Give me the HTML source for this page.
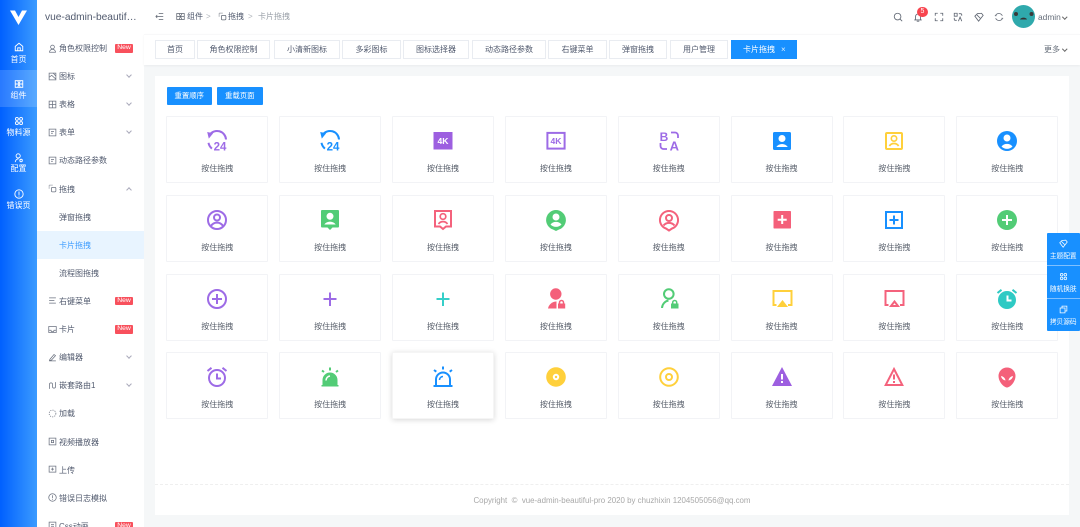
<!DOCTYPE html>
<html lang="zh"><head><meta charset="utf-8"><title>卡片拖拽</title>
<style>
*{box-sizing:border-box}
html,body{margin:0;padding:0}
html{background:#f5f7f8}
body{width:1080px;height:527px;overflow:hidden;position:relative;background:#f5f7f8;font-family:"Liberation Sans","Noto Sans CJK SC",sans-serif;color:#515a6e;font-size:8px;filter:blur(.3px)}
.a{position:absolute}
#col{left:0;top:0;width:37px;height:527px;background:linear-gradient(90deg,#0060ff,#3b9bff)}
#col .n{position:absolute;left:0;width:37px;height:36.7px;color:#fff;text-align:center;font-size:8px}
#col .n svg{position:absolute;left:13.5px;top:5.5px;width:10px;height:10px;fill:none;stroke:#fff;stroke-width:2.2}
#col .n span{position:absolute;left:0;right:0;top:18px;line-height:12px}
#col .on{background:rgba(255,255,255,.16)}
#side{left:37px;top:0;width:107px;height:527px;background:#fff;overflow:hidden}
#side h1{margin:0;position:absolute;left:8px;top:10px;width:96px;font-size:10.2px;line-height:16px;font-weight:400;color:#515a6e;white-space:nowrap;overflow:hidden;text-overflow:ellipsis}
#m{position:absolute;left:0;top:34px;width:107px}
.i{position:relative;height:28.12px;line-height:29px;padding-left:22px;white-space:nowrap;font-size:8px;color:#515a6e}
.i>svg{position:absolute;left:11px;top:9.5px;width:9px;height:9px;fill:none;stroke:#6b7280;stroke-width:2}
.i b{position:absolute;left:78px;top:10px;width:18px;height:8.5px;background:#f8505c;border-radius:1px;color:#fff;font:400 6.8px/8.5px "Liberation Sans",sans-serif;text-align:center}
.i i{position:absolute;left:90px;top:10.5px;width:4px;height:4px;border-right:.8px solid #aab;border-bottom:.8px solid #aab;transform:rotate(45deg)}
.i i.u{top:13px;transform:rotate(225deg)}
.i.s{background:#e8f4ff;color:#3f9dff}
#top{left:144px;top:0;width:936px;height:34px;background:#fff}
#tabs{left:144px;top:34px;width:936px;height:31px;background:#fff;border-top:1px solid #f8f8f9;box-shadow:0 1px 2px rgba(0,21,41,.05)}
.t{position:absolute;top:40px;height:19px;background:#fff;border:1px solid #e9ecf1;font-size:8px;line-height:17px;text-align:center;color:#515a6e}
.t.on{background:#1890ff;border-color:#1890ff;color:#fff;text-align:left;padding-left:11px}
.t.on em{position:absolute;left:49px;top:0;font:400 8px/17px "Liberation Sans",sans-serif;color:#dbeeff}
#main{left:155px;top:76px;width:914px;height:439px;background:#fff}
.btn{position:absolute;top:87px;height:18px;width:45.5px;background:#1890ff;border-radius:1px;color:#fff;font-size:7.4px;line-height:18px;text-align:center}
#g{position:absolute;left:166.3px;top:116.4px;display:grid;grid-template-columns:repeat(8,102px);grid-auto-rows:67px;column-gap:10.85px;row-gap:11.67px}
.c{position:relative;background:#fff;border:1px solid #f2f3f6;border-radius:1px;text-align:center;font-size:8px;color:#555c68}
.c svg{position:absolute;left:38px;top:12px;width:24px;height:24px}
.c p{position:absolute;left:0;right:0;top:46px;margin:0;line-height:12px}
.c.h{border-color:#f5f5f5;box-shadow:0 1px 6px rgba(0,0,0,.16)}
#foot{left:155px;top:484px;width:914px;height:31px;border-top:1px dashed #efefef;text-align:center;font-size:7.9px;line-height:31px;color:#a8a8a8}
#fx{left:1046.5px;top:233px;width:33.5px;height:98px;background:#1890ff;border-radius:1px}
#fx div{position:absolute;left:0;width:33.5px;height:32.5px;color:#fff;font-size:6.7px;text-align:center;border-bottom:1px solid #7fc0ff}
#fx svg{position:absolute;left:12.5px;top:6px;width:9px;height:9px;fill:none;stroke:#fff;stroke-width:2}
#fx span{position:absolute;left:0;right:0;top:19px;line-height:9px;white-space:nowrap}
.ti{position:absolute;top:11.5px;width:10px;height:10px;fill:none;stroke:#5f6672;stroke-width:2}
.bc{position:absolute;top:11px;line-height:12px;font-size:8px;color:#515a6e}
</style></head><body>

<div id="col" class="a">
<svg class="a" style="left:9px;top:9px" width="20" height="18" viewBox="0 0 20 18"><polygon points="1,1.5 6,1.5 9.5,8 13,1.5 18,1.5 9.5,16" fill="#fff"/></svg>
<div class="n" style="top:36px"><svg viewBox="0 0 24 24"><path d="M3 10.5 12 3l9 7.5V21H3zM9 20v-6h6v6"/></svg><span>首页</span></div>
<div class="n on" style="top:70px;height:37px"><svg style="top:9px" viewBox="0 0 24 24"><rect x="3" y="4" width="18" height="16"/><path d="M3 12h18M9 4l6 16M15 4 9 20"/></svg><span style="top:19.5px">组件</span></div>
<div class="n" style="top:107px"><svg style="top:9px" viewBox="0 0 24 24"><circle cx="7" cy="7" r="3.5"/><circle cx="17" cy="7" r="3.5"/><circle cx="7" cy="17" r="3.5"/><circle cx="17" cy="17" r="3.5"/></svg><span style="top:19.5px">物料源</span></div>
<div class="n" style="top:143.5px"><svg style="top:9px" viewBox="0 0 24 24"><circle cx="10" cy="7" r="5"/><path d="M3 22a8 8 0 0 1 8-8"/><circle cx="17" cy="18" r="3"/></svg><span style="top:19px">配置</span></div>
<div class="n" style="top:180px"><svg style="top:9px" viewBox="0 0 24 24"><circle cx="12" cy="12" r="10"/><path d="M12 6v8M12 16v2"/></svg><span style="top:19.5px">错误页</span></div>
</div>

<div id="side" class="a"><h1>vue-admin-beautiful-pro</h1>
<div id="m">
<div class="i"><svg viewBox="0 0 24 24"><circle cx="12" cy="8" r="5"/><path d="M4 22a8 8 0 0 1 16 0z"/></svg>角色权限控制<b>New</b></div>
<div class="i"><svg viewBox="0 0 24 24"><rect x="3" y="3" width="18" height="18"/><path d="M3 14l7-5 11 10M14 3l6 7"/></svg>图标<i></i></div>
<div class="i"><svg viewBox="0 0 24 24"><rect x="3" y="3" width="18" height="18"/><path d="M3 12h18M12 3v18"/></svg>表格<i></i></div>
<div class="i"><svg viewBox="0 0 24 24"><rect x="3" y="3" width="18" height="18"/><path d="M8 9h8M8 14h5"/></svg>表单<i></i></div>
<div class="i"><svg viewBox="0 0 24 24"><rect x="3" y="3" width="18" height="18"/><path d="M8 9h8M8 14h5"/></svg>动态路径参数</div>
<div class="i"><svg viewBox="0 0 24 24"><path d="M3 12V3h9" stroke-dasharray="3 2"/><rect x="9" y="9" width="12" height="12" rx="3"/></svg>拖拽<i class="u"></i></div>
<div class="i">弹窗拖拽</div>
<div class="i s">卡片拖拽</div>
<div class="i">流程图拖拽</div>
<div class="i"><svg viewBox="0 0 24 24"><path d="M3 5h18M3 12h14M3 19h18"/></svg>右键菜单<b>New</b></div>
<div class="i"><svg viewBox="0 0 24 24"><rect x="2" y="4" width="20" height="16"/><path d="M2 14h6a4 4 0 0 0 8 0h6"/></svg>卡片<b>New</b></div>
<div class="i"><svg viewBox="0 0 24 24"><path d="M3 21h18M5 17 16 4l4 3L9 19l-5 1z"/></svg>编辑器<i></i></div>
<div class="i"><svg viewBox="0 0 24 24"><path d="M4 21V9a4 4 0 0 1 8 0v6a4 4 0 0 0 8 0V3"/></svg>嵌套路由1<i></i></div>
<div class="i"><svg viewBox="0 0 24 24" stroke-dasharray="3 3"><circle cx="12" cy="12" r="9"/></svg>加载</div>
<div class="i"><svg viewBox="0 0 24 24"><rect x="3" y="3" width="18" height="18"/><path d="M9 9h6v6H9z"/></svg>视频播放器</div>
<div class="i"><svg viewBox="0 0 24 24"><path d="M3 3h18v16H3zM12 7v8M8 11h8"/></svg>上传</div>
<div class="i"><svg viewBox="0 0 24 24"><circle cx="12" cy="12" r="10"/><path d="M12 6v8M12 16v2"/></svg>错误日志模拟</div>
<div class="i"><svg viewBox="0 0 24 24"><rect x="3" y="3" width="18" height="18"/><path d="M8 9h8M8 14h8"/></svg>Css动画<b>New</b></div>
</div></div>

<div id="top" class="a"></div>
<svg class="ti" style="left:155px;width:9px;height:9px;top:12px" viewBox="0 0 24 24"><path d="M10 4h12M2 12h20M10 20h12M6 8l-4 4M6 16l-4-4" stroke-width="1.8"/></svg>
<svg class="ti" style="left:176px;width:9px;height:9px;top:12px" viewBox="0 0 24 24"><rect x="2" y="4" width="20" height="16"/><path d="M2 12h20M8 4l8 16M16 4 8 20"/></svg>
<span class="bc" style="left:187px">组件</span><span class="bc" style="left:206px;color:#b0b4bb">&gt;</span>
<svg class="ti" style="left:217.500px;width:9px;height:9px;top:12px" viewBox="0 0 24 24"><path d="M3 12V3h9" stroke-dasharray="3 2"/><rect x="9" y="9" width="12" height="12" rx="3"/></svg>
<span class="bc" style="left:228px">拖拽</span><span class="bc" style="left:248px;color:#b0b4bb">&gt;</span>
<span class="bc" style="left:258px;color:#9aa0a8">卡片拖拽</span>

<svg class="ti" style="left:893px" viewBox="0 0 24 24"><circle cx="11" cy="11" r="8"/><path d="M17 17l5 5"/></svg>
<svg class="ti" style="left:913px" viewBox="0 0 24 24"><path d="M3 19h18M6 19v-8a6 6 0 0 1 12 0v8M9 22h6"/></svg>
<div class="a" style="left:917px;top:7px;width:11px;height:10px;border-radius:6px;background:#f8454f;color:#fff;font:400 7px/10px 'Liberation Sans',sans-serif;text-align:center">5</div>
<svg class="ti" style="left:934px" viewBox="0 0 24 24"><path d="M3 9V3h6M15 3h6v6M21 15v6h-6M9 21H3v-6"/></svg>
<svg class="ti" style="left:953px" viewBox="0 0 24 24"><path d="M3 3h7v7H3zM14 4h4a3 3 0 0 1 3 3v2M3 14v3a3 3 0 0 0 3 3h3M13 22l4-10 4 10"/></svg>
<svg class="ti" style="left:974px" viewBox="0 0 24 24"><path d="M2 10l9 12L22 8 18 3 8 4zM7 7l8 8"/></svg>
<svg class="ti" style="left:994px" viewBox="0 0 24 24"><path d="M4 8a9 9 0 0 1 16 1M20 16a9 9 0 0 1-16-1M2 9h4M18 15h4" /></svg>
<svg class="a" style="left:1012px;top:5px" width="23" height="23" viewBox="0 0 23 23"><circle cx="11.5" cy="11.5" r="11.5" fill="#2fa9ac"/><circle cx="4" cy="9" r="2" fill="#3a3a3a"/><circle cx="19.500" cy="9" r="2" fill="#3a3a3a"/><path d="M8 14.500c1-2.500 6-2.500 7 0" fill="#333"/></svg>
<span class="a" style="left:1038px;top:10.5px;font-size:8.4px;line-height:12px;color:#666e7a">admin</span>
<i class="a" style="left:1063px;top:14.5px;width:3.5px;height:3.5px;border-right:.8px solid #666;border-bottom:.8px solid #666;transform:rotate(45deg)"></i>

<div id="tabs" class="a"></div>
<div class="t" style="left:155px;width:40px">首页</div>
<div class="t" style="left:197px;width:73px">角色权限控制</div>
<div class="t" style="left:274px;width:66px">小清新图标</div>
<div class="t" style="left:342px;width:59px">多彩图标</div>
<div class="t" style="left:403px;width:66px">图标选择器</div>
<div class="t" style="left:472px;width:74px">动态路径参数</div>
<div class="t" style="left:548px;width:59px">右键菜单</div>
<div class="t" style="left:609px;width:58px">弹窗拖拽</div>
<div class="t" style="left:670px;width:58px">用户管理</div>
<div class="t on" style="left:731px;width:66px">卡片拖拽<em>×</em></div>
<span class="a" style="left:1044px;top:44px;line-height:12px;font-size:8px;color:#666e7a">更多</span>
<i class="a" style="left:1063px;top:47px;width:3.5px;height:3.5px;border-right:.8px solid #666;border-bottom:.8px solid #666;transform:rotate(45deg)"></i>

<div id="main" class="a"></div>
<div class="btn" style="left:166.5px">重置顺序</div>
<div class="btn" style="left:217px">重载页面</div>

<div id="g">
<div class="c"><svg viewBox="0 0 24 24" fill="none" stroke="#9d6be6" stroke-width="2"><path d="M4.5 6A9 9 0 0 1 21 10.5M3.5 13.8c.4 2.2 1.6 4.2 3.4 5.8"/><path d="M2.2 3l6 1.2-4.4 5.4z" fill="#9d6be6" stroke="none"/><text x="8.6" y="21.6" font-size="11.5" font-weight="700" fill="#9d6be6" stroke="none" font-family="Liberation Sans">24</text></svg><p>按住拖拽</p></div>
<div class="c"><svg viewBox="0 0 24 24" fill="none" stroke="#1890ff" stroke-width="2"><path d="M4.5 6A9 9 0 0 1 21 10.5M3.5 13.8c.4 2.2 1.6 4.2 3.4 5.8"/><path d="M2.2 3l6 1.2-4.4 5.4z" fill="#1890ff" stroke="none"/><text x="8.6" y="21.6" font-size="11.5" font-weight="700" fill="#1890ff" stroke="none" font-family="Liberation Sans">24</text></svg><p>按住拖拽</p></div>
<div class="c"><svg viewBox="0 0 24 24"><rect x="2.5" y="3" width="19" height="17.5" fill="#9d5fe0"/><text x="12" y="15.2" text-anchor="middle" font-size="8.6" font-weight="700" fill="#fff" font-family="Liberation Sans">4K</text></svg><p>按住拖拽</p></div>
<div class="c"><svg viewBox="0 0 24 24"><rect x="3.4" y="3.9" width="17.2" height="15.700" fill="none" stroke="#9d6be6" stroke-width="2"/><text x="12" y="15" text-anchor="middle" font-size="8.6" font-weight="700" fill="#9d6be6" font-family="Liberation Sans">4K</text></svg><p>按住拖拽</p></div>
<div class="c"><svg viewBox="0 0 24 24" fill="none" stroke="#9d6be6" stroke-width="1.8"><path d="M14 3.5h4a3 3 0 0 1 3 3V9M3.5 14v3a3 3 0 0 0 3 3H10"/><text x="2.6" y="12" font-size="12" font-weight="700" fill="#9d6be6" stroke="none" font-family="Liberation Sans">B</text><text x="12.6" y="21.4" font-size="13" font-weight="700" fill="#9d6be6" stroke="none" font-family="Liberation Sans">A</text></svg><p>按住拖拽</p></div>
<div class="c"><svg viewBox="0 0 24 24"><rect x="3" y="3" width="18" height="18" rx="1.5" fill="#1890ff"/><circle cx="12" cy="9.5" r="3.5" fill="#fff"/><path d="M6.3 18a7 7 0 0 1 11.5 0z" fill="#fff"/></svg><p>按住拖拽</p></div>
<div class="c"><svg viewBox="0 0 24 24" fill="none" stroke="#ffd03b" stroke-width="2"><rect x="4" y="4" width="16" height="16" rx="1"/><circle cx="12" cy="9.5" r="2.7" stroke-width="1.6"/><path d="M7.4 17a5.5 5.5 0 0 1 9.2 0" stroke-width="1.8"/></svg><p>按住拖拽</p></div>
<div class="c"><svg viewBox="0 0 24 24"><circle cx="12" cy="12" r="10" fill="#1890ff"/><circle cx="12" cy="9" r="3.5" fill="#fff"/><path d="M6.5 17.5a7 7 0 0 1 11 0 7.5 7.5 0 0 1-11 0z" fill="#fff"/></svg><p>按住拖拽</p></div>

<div class="c"><svg viewBox="0 0 24 24" fill="none" stroke="#9d6be6" stroke-width="2"><circle cx="12" cy="12" r="9"/><circle cx="12" cy="9.5" r="3"/><path d="M6 18a7 7 0 0 1 12 0"/></svg><p>按住拖拽</p></div>
<div class="c"><svg viewBox="0 0 24 24"><path d="M4 2h16a1 1 0 0 1 1 1v15.5a1 1 0 0 1-1 1h-5.500L12 22l-2.500-2.500H4a1 1 0 0 1-1-1V3a1 1 0 0 1 1-1z" fill="#52cc76"/><circle cx="12" cy="8.300" r="3.500" fill="#fff"/><path d="M6.300 16.500a7 7 0 0 1 11.400 0z" fill="#fff"/></svg><p>按住拖拽</p></div>
<div class="c"><svg viewBox="0 0 24 24" fill="none" stroke="#f4627c" stroke-width="2"><path d="M4 3h16v15.500h-5L12 21l-3-2.500H4z"/><circle cx="12" cy="8.500" r="2.800" stroke-width="1.700"/><path d="M7.500 16a5.500 5.500 0 0 1 9 0" stroke-width="1.700"/></svg><p>按住拖拽</p></div>
<div class="c"><svg viewBox="0 0 24 24"><path d="M12 2a10 10 0 0 1 3 19.500L12 23l-3-1.500A10 10 0 0 1 12 2z" fill="#52cc76"/><circle cx="12" cy="9" r="3.500" fill="#fff"/><path d="M6.500 16.500a7 7 0 0 1 11 0 7.500 7.500 0 0 1-11 0z" fill="#fff"/></svg><p>按住拖拽</p></div>
<div class="c"><svg viewBox="0 0 24 24" fill="none" stroke="#f4627c" stroke-width="2"><path d="M12 3a9 9 0 0 1 3 17.500L12 22.500l-3-2A9 9 0 0 1 12 3z"/><circle cx="12" cy="10" r="3"/><path d="M6.500 17.500a7 7 0 0 1 11 0"/></svg><p>按住拖拽</p></div>
<div class="c"><svg viewBox="0 0 24 24"><rect x="3.500" y="3" width="17.500" height="17.500" rx=".8" fill="#f4607a"/><path d="M12.200 7v9M7.700 11.700h9" stroke="#fff" stroke-width="2"/></svg><p>按住拖拽</p></div>
<div class="c"><svg viewBox="0 0 24 24" fill="none" stroke="#1890ff" stroke-width="2"><rect x="4" y="4" width="16" height="16"/><path d="M12 7.500v9M7.500 12h9"/></svg><p>按住拖拽</p></div>
<div class="c"><svg viewBox="0 0 24 24"><circle cx="12" cy="12" r="10" fill="#52cc76"/><path d="M12 7v10M7 12h10" stroke="#fff" stroke-width="2"/></svg><p>按住拖拽</p></div>

<div class="c"><svg viewBox="0 0 24 24" fill="none" stroke="#9d6be6" stroke-width="2"><circle cx="12" cy="12" r="9"/><path d="M12 7v10M7 12h10"/></svg><p>按住拖拽</p></div>
<div class="c"><svg viewBox="0 0 24 24" fill="none" stroke="#9d6be6" stroke-width="2"><path d="M12 5.500v13.500M5.500 12h13"/></svg><p>按住拖拽</p></div>
<div class="c"><svg viewBox="0 0 24 24" fill="none" stroke="#36cfc9" stroke-width="2"><path d="M12 5.500v13.500M5.500 12h13"/></svg><p>按住拖拽</p></div>
<div class="c"><svg viewBox="0 0 24 24" fill="#f4607a"><circle cx="11.800" cy="7" r="5.700"/><path d="M4 21.500a8.500 8.500 0 0 1 8.500-7v7z"/><rect x="14" y="16.500" width="7.200" height="5"/><path d="M15.500 17v-1.500a2 2 0 0 1 4 0V17" fill="none" stroke="#f4607a" stroke-width="1.500"/></svg><p>按住拖拽</p></div>
<div class="c"><svg viewBox="0 0 24 24" fill="none" stroke="#52cc76" stroke-width="2"><circle cx="11.800" cy="7" r="4.800"/><path d="M5 21a8 8 0 0 1 6.500-7.500"/><rect x="14" y="16.500" width="7.500" height="5" fill="#52cc76" stroke="none"/><path d="M15.700 17v-1.500a2 2 0 0 1 4 0V17" stroke-width="1.500"/></svg><p>按住拖拽</p></div>
<div class="c"><svg viewBox="0 0 24 24"><path d="M6.500 18H3.500V4h18v14H18" fill="none" stroke="#ffd03b" stroke-width="2"/><path d="M12.500 13l5.500 7H7z" fill="#ffd03b"/></svg><p>按住拖拽</p></div>
<div class="c"><svg viewBox="0 0 24 24"><path d="M6.500 18H3.500V4h18v14H18" fill="none" stroke="#f4627c" stroke-width="2"/><path d="M12.500 14.500l3.500 4.500H9z" fill="none" stroke="#f4627c" stroke-width="2"/></svg><p>按住拖拽</p></div>
<div class="c"><svg viewBox="0 0 24 24"><circle cx="12" cy="13" r="9" fill="#2ecac4"/><path d="M12.500 8.500v5h4" fill="none" stroke="#fff" stroke-width="2"/><path d="M6.500 2.800 2.500 6M17.500 2.800l4 3.200" stroke="#2ecac4" stroke-width="2"/></svg><p>按住拖拽</p></div>

<div class="c"><svg viewBox="0 0 24 24" fill="none" stroke="#9d6be6" stroke-width="2"><circle cx="12" cy="13" r="8"/><path d="M12 8.500v5h4M6.500 2.800 2.500 6M17.500 2.800l4 3.200"/></svg><p>按住拖拽</p></div>
<div class="c"><svg viewBox="0 0 24 24"><path d="M4.500 20v-5a7.500 7.500 0 0 1 15 0v5h1v1.500h-17V20z" fill="#52cc76"/><path d="M12 2.500v3M4 5.500l2 1.500M20 5.500l-2 1.500" stroke="#52cc76" stroke-width="2"/><path d="M8 15.500a4.500 4.500 0 0 1 4-4.500" fill="none" stroke="#fff" stroke-width="1.500"/></svg><p>按住拖拽</p></div>
<div class="c h"><svg viewBox="0 0 24 24" fill="none" stroke="#1890ff" stroke-width="2"><path d="M5 21v-6.500a7 7 0 0 1 14 0V21M2.500 21h19M12 1.500v3M3 5l2.300 1.700M21 5l-2.300 1.700"/><path d="M8.500 15a3.500 3.500 0 0 1 3.500-3.500" stroke-width="1.500"/></svg><p>按住拖拽</p></div>
<div class="c"><svg viewBox="0 0 24 24"><circle cx="12" cy="12" r="9.800" fill="#ffd03b"/><circle cx="12" cy="12" r="3.200" fill="#fff"/><circle cx="12" cy="12" r="1.200" fill="#ffd03b"/></svg><p>按住拖拽</p></div>
<div class="c"><svg viewBox="0 0 24 24" fill="none" stroke="#ffd03b" stroke-width="2"><circle cx="12" cy="12" r="8.800"/><circle cx="12" cy="12" r="3"/></svg><p>按住拖拽</p></div>
<div class="c"><svg viewBox="0 0 24 24"><path d="M12 2 22 21H2z" fill="#9d5fe0"/><path d="M12 9v5.500M12 16v2" stroke="#fff" stroke-width="2"/></svg><p>按住拖拽</p></div>
<div class="c"><svg viewBox="0 0 24 24"><path d="M12 4 20.300 20H3.700z" fill="none" stroke="#f4627c" stroke-width="2"/><path d="M12 9.500v5M12 16v2" stroke="#f4627c" stroke-width="2"/></svg><p>按住拖拽</p></div>
<div class="c"><svg viewBox="0 0 24 24"><path d="M12 2.500a8.500 8.500 0 0 1 8.500 8.500c0 6-5.500 11.500-8.500 11.500S3.500 17 3.500 11A8.500 8.500 0 0 1 12 2.500z" fill="#f4607a"/><path d="M18 11a5 5 0 0 0-4.500 4.500A5 5 0 0 0 18 11zM6 11a5 5 0 0 1 4.500 4.500A5 5 0 0 1 6 11z" fill="#fff"/></svg><p>按住拖拽</p></div>
</div>

<div id="foot" class="a">Copyright &nbsp;© &nbsp;vue-admin-beautiful-pro 2020 by chuzhixin 1204505056@qq.com</div>

<div id="fx" class="a">
<div style="top:0"><svg viewBox="0 0 24 24"><path d="M2 10l9 12L22 8 18 3 8 4zM7 7l8 8"/></svg><span>主题配置</span></div>
<div style="top:33px"><svg viewBox="0 0 24 24"><circle cx="7" cy="7" r="3.500"/><circle cx="17" cy="7" r="3.500"/><circle cx="7" cy="17" r="3.500"/><circle cx="17" cy="17" r="3.500"/></svg><span>随机换肤</span></div>
<div style="top:66px;border-bottom:0"><svg viewBox="0 0 24 24"><rect x="3" y="8" width="13" height="13"/><path d="M8 8V3h13v13h-5"/></svg><span>拷贝源码</span></div>
</div>
</body></html>
